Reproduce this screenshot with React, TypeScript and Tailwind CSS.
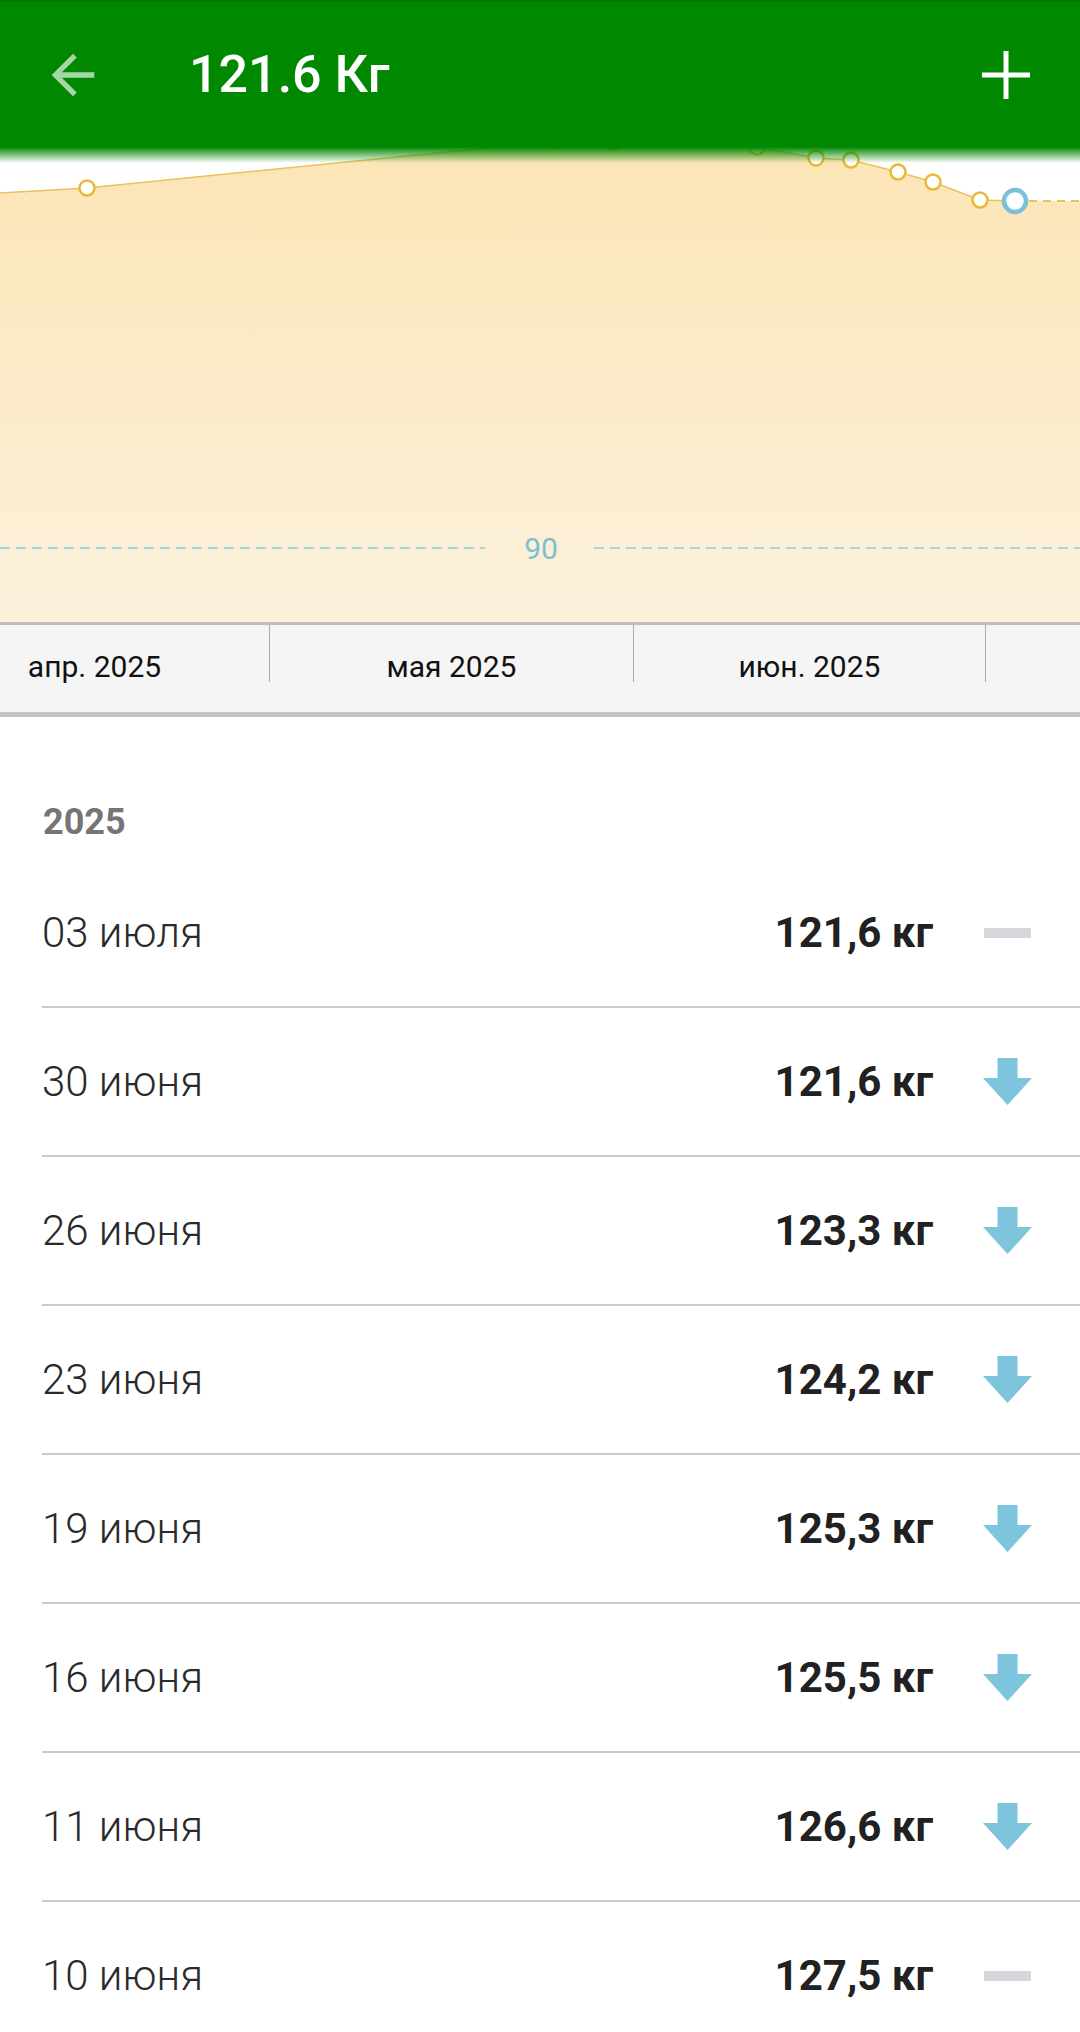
import React from "react";

const rows: { date: string; weight: string; trend: "flat" | "down" }[] = [
  { date: "03 июля", weight: "121,6 кг", trend: "flat" },
  { date: "30 июня", weight: "121,6 кг", trend: "down" },
  { date: "26 июня", weight: "123,3 кг", trend: "down" },
  { date: "23 июня", weight: "124,2 кг", trend: "down" },
  { date: "19 июня", weight: "125,3 кг", trend: "down" },
  { date: "16 июня", weight: "125,5 кг", trend: "down" },
  { date: "11 июня", weight: "126,6 кг", trend: "down" },
  { date: "10 июня", weight: "127,5 кг", trend: "flat" },
];

const points: [number, number][] = [
  [87, 188],
  [557, 141],
  [615, 142],
  [757, 147],
  [816, 158],
  [851, 160],
  [898, 172],
  [933, 182],
  [980, 200],
];

function Chart() {
  const linePts = [[0, 193], ...points, [1015, 201]] as [number, number][];
  const lineD = linePts.map((p, i) => `${i === 0 ? "M" : "L"}${p[0]},${p[1]}`).join(" ");
  const fillD = `${lineD} L1080,201 L1080,622 L0,622 Z`;
  return (
    <svg width="1080" height="475" viewBox="0 147 1080 475" className="block">
      <defs>
        <linearGradient id="fillg" x1="0" y1="147" x2="0" y2="622" gradientUnits="userSpaceOnUse">
          <stop offset="0" stopColor="#FCE5B6" />
          <stop offset="1" stopColor="#FBF1DC" />
        </linearGradient>
      </defs>
      <rect x="0" y="147" width="1080" height="475" fill="#ffffff" />
      <path d={fillD} fill="url(#fillg)" />
      <path d={lineD} fill="none" stroke="#E9C25E" strokeWidth="1.5" />
      <line x1="1015" y1="201" x2="1080" y2="201" stroke="#E9C25E" strokeWidth="2" strokeDasharray="8 6" />
      <line x1="0" y1="548" x2="485" y2="548" stroke="#A9D4D8" strokeWidth="2" strokeDasharray="10 6" />
      <line x1="594" y1="548" x2="1080" y2="548" stroke="#A9D4D8" strokeWidth="2" strokeDasharray="10 6" />
      <text
        x="541"
        y="559"
        textAnchor="middle"
        fontSize="30"
        fill="#7DBFD0"
        style={{ fontFamily: "Roboto, 'Noto Sans', sans-serif" }}
      >
        90
      </text>
      {points.map((p, i) => (
        <circle key={i} cx={p[0]} cy={p[1]} r="7.5" fill="#ffffff" stroke="#EAB834" strokeWidth="2.5" />
      ))}
      <circle cx="1015" cy="201" r="11" fill="#ffffff" stroke="#7CC0D8" strokeWidth="4.5" />
    </svg>
  );
}

function DownArrow() {
  return (
    <svg width="49" height="47" viewBox="0 0 49 47" className="block">
      <path d="M14.5 0 H34.5 V20 H49 L24.5 47 L0 20 H14.5 Z" fill="#7EC4DD" />
    </svg>
  );
}

export default function App() {
  return (
    <div className="w-[1080px] h-[2032px] overflow-hidden bg-white" style={{ fontFamily: "Roboto, 'Noto Sans', sans-serif" }}>
      <div className="relative z-10 h-[147px] bg-[#008800] border-t-[2px] border-[#007600] flex items-center">
        <div className="absolute left-0 right-0 top-full h-[16px] bg-gradient-to-b from-[#008800] to-transparent" />
        <svg width="64" height="64" viewBox="0 0 24 24" className="ml-[41px] shrink-0">
          <path d="M20 11H7.83l5.59-5.59L12 4l-8 8 8 8 1.41-1.41L7.83 13H20v-2z" fill="rgba(255,255,255,0.65)" />
        </svg>
        <div className="ml-[84px] text-[52px] leading-none font-medium text-white flex-1">121.6 Кг</div>
        <svg width="48" height="48" viewBox="0 0 48 48" className="mr-[50px] shrink-0">
          <rect x="21.5" y="0" width="5" height="48" fill="#ffffff" />
          <rect x="0" y="21.5" width="48" height="5" fill="#ffffff" />
        </svg>
      </div>

      <Chart />

      <div className="h-[95px] bg-[#F5F5F5] border-t-[3px] border-b-[5px] border-t-[#BDBDBD] border-b-[#C4C4C6] overflow-hidden">
        <div className="flex -ml-[80px] w-[1500px]">
          {[
            { label: "апр. 2025", w: "w-[350px]" },
            { label: "мая 2025", w: "w-[364px]" },
            { label: "июн. 2025", w: "w-[352px]" },
            { label: "", w: "w-[350px]" },
          ].map((c, i) => (
            <div
              key={i}
              className={`${c.w} h-[57px] border-r border-[#ACACAC] flex items-end justify-center text-[30px] leading-none text-[#111111] shrink-0`}
            >
              {c.label}
            </div>
          ))}
        </div>
      </div>

      <div className="pt-[87px]">
        <div className="ml-[43px] text-[36px] leading-none font-bold text-[#757575] h-[36px]">2025</div>
        <div className="mt-[19px]">
          {rows.map((r, i) => (
            <div key={i} className="ml-[42px] h-[149px] border-b-[2px] border-[#CACACA] flex items-center">
              <div className="flex-1 text-[42px] font-light leading-none text-[#2a2a2a] pt-[1px]">{r.date}</div>
              <div className="text-[42px] font-bold leading-none text-[#212121] pt-[1px]">{r.weight}</div>
              <div className="w-[49px] ml-[50px] mr-[48px] flex items-center justify-center">
                {r.trend === "down" ? (
                  <DownArrow />
                ) : (
                  <div className="w-[47px] h-[10px] bg-[#D6D6DB]" />
                )}
              </div>
            </div>
          ))}
        </div>
      </div>
    </div>
  );
}
